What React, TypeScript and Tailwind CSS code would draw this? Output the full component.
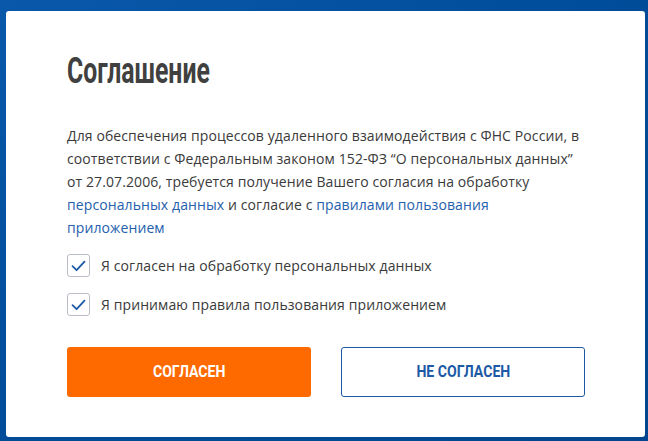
import React, { useState } from 'react';

const condensed = { fontFamily: '"Roboto", "Liberation Sans", sans-serif' };

function CheckRow({ label, checked, onToggle }: { label: string; checked: boolean; onToggle: () => void }) {
  return (
    <label className="flex items-center gap-[11px] cursor-pointer select-none">
      <button
        type="button"
        onClick={onToggle}
        className="w-[23px] h-[23px] shrink-0 rounded-[3px] border border-[#b9bec6] bg-white flex items-center justify-center"
      >
        {checked && (
          <svg width="15" height="12" viewBox="0 0 15 12" fill="none">
            <path d="M1.5 6.2 L5.6 10.2 L13.5 1.6" stroke="#1d5aa6" strokeWidth="1.8" strokeLinecap="round" strokeLinejoin="round" />
          </svg>
        )}
      </button>
      <span className="text-[14px] tracking-[0.1px] text-[#3a3a3a]">{label}</span>
    </label>
  );
}

export default function App() {
  const [personal, setPersonal] = useState(true);
  const [rules, setRules] = useState(true);

  return (
    <div className="w-[648px] h-[441px] bg-gradient-to-br from-[#0a58aa] via-[#004c99] to-[#00468f] pt-[11px] pl-[6px] pr-[3px] pb-[4px]" style={{ fontFamily: '"Open Sans", "Noto Sans", sans-serif' }}>
      <div className="w-[639px] h-[426px] bg-white rounded-[3px] pl-[61px] pr-[60px] pt-[40px]">
        <h1
          className="inline-block origin-left scale-x-[0.67] text-[37px] leading-[40px] font-bold text-[#404040] whitespace-nowrap"
          style={condensed}
        >
          Соглашение
        </h1>

        <p className="mt-[33px] max-w-[516px] text-[14px] leading-[23px] tracking-[0.1px] text-[#3a3a3a]">
          Для обеспечения процессов удаленного взаимодействия с ФНС России, в соответствии с Федеральным законом 152-ФЗ “О персональных данных” от 27.07.2006, требуется получение Вашего согласия на обработку{' '}
          <a href="#" className="text-[#2560ad]">персональных данных</a> и согласие с{' '}
          <a href="#" className="text-[#2560ad]">правилами пользования приложением</a>
        </p>

        <div className="mt-[15px] flex flex-col gap-[16px]">
          <CheckRow label="Я согласен на обработку персональных данных" checked={personal} onToggle={() => setPersonal(!personal)} />
          <CheckRow label="Я принимаю правила пользования приложением" checked={rules} onToggle={() => setRules(!rules)} />
        </div>

        <div className="mt-[31px] flex gap-[30px]" style={condensed}>
          <button className="w-[245px] h-[50px] rounded-[3px] bg-[#ff6a00] text-white text-[16px] font-bold">
            <span className="inline-block scale-x-[0.88]">СОГЛАСЕН</span>
          </button>
          <button className="w-[245px] h-[50px] rounded-[3px] border border-[#1d5aa6] bg-white text-[#1d5aa6] text-[16px] font-bold">
            <span className="inline-block scale-x-[0.88]">НЕ СОГЛАСЕН</span>
          </button>
        </div>
      </div>
    </div>
  );
}
